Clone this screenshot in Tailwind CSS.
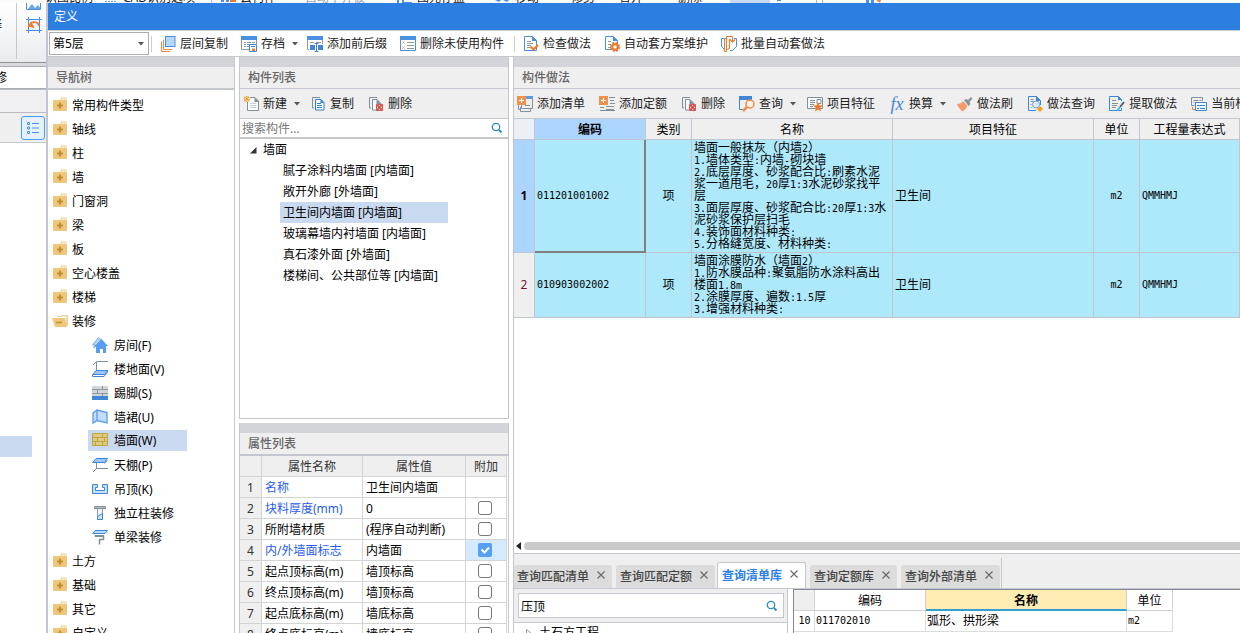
<!DOCTYPE html>
<html lang="zh-CN">
<head>
<meta charset="utf-8">
<title>定义</title>
<script src="https://cdn.jsdelivr.net/npm/@tailwindcss/browser@4"></script>
</head>
<body class="relative h-screen overflow-hidden bg-white font-['Noto_Sans','Noto_Sans_CJK_SC',sans-serif] text-xs leading-4 text-black">

<svg class="hidden" xmlns="http://www.w3.org/2000/svg">
  <symbol id="folder" viewBox="0 1 16 16"><path fill="#f4d9a4" d="M8 2.500 9 1.500h5l1 1v2H8z"/><path fill="#fff" d="M8 3.500h7v1H8z"/><rect x="1" y="4" width="14" height="11" rx="1" fill="#efc77c"/><path stroke="#c6902f" stroke-width="2" d="M5 9.500h6M8 6.500v6"/></symbol>
  <symbol id="folder-open" viewBox="0 1 16 16"><path fill="#f2d196" d="M5 4h4l1-1h6v11h-2V5H5z"/><path fill="#fff" d="M10 4.500h5v1h-5z"/><path fill="#efc77c" d="M0 6h13l2 9H3z"/><path stroke="#c6902f" stroke-width="1.500" d="M4 10.500h6"/></symbol>
  <symbol id="arrow" viewBox="0 0 6 4"><path fill="#555" d="M0 0h6L3 3.500z"/></symbol>
  <symbol id="x" viewBox="0 0 8 8"><path stroke="#666" stroke-width="1.100" d="m.5.500 7 7m0-7-7 7"/></symbol>
  <symbol id="search" viewBox="0 0 12 12" fill="none" stroke="#2d8cc4"><circle cx="5" cy="5" r="3.700" stroke-width="1.300"/><path stroke-width="2" d="m8 8 2.500 2.500"/></symbol>
  <symbol id="layers" viewBox="0 0 16 16" fill="none"><path stroke="#e98a45" d="M1.500 5.500v10H10M3.500 3.500v10H12"/><rect x="5.500" y=".5" width="9.500" height="10" fill="#b5d7fb" stroke="#4a8fdc"/></symbol>
  <symbol id="save" viewBox="0 0 16 16" fill="none"><path stroke="#8a9aa5" d="M.5 4v9.500H8M15.500 4v4"/><path fill="#4a90e2" d="M0 0h16v4H0z"/><path stroke="#8a9aa5" d="M3 6.500h2m1 0h4m1 0h3M3 8.500h2m1 0h3M3 10.500h2m1 0h2"/><path fill="#fff" stroke="#3f86d8" d="M8.500 8.500h7v7h-7z"/><path stroke="#3f86d8" d="M10 10.500h4"/><path fill="#f07a2b" d="M11 12.500h3V15h-3z"/></symbol>
  <symbol id="affix" viewBox="0 0 16 16" fill="none"><path stroke="#8a9aa5" d="M.5 4v9.500H2M15.500 4v4"/><path fill="#4a90e2" d="M0 0h16v4H0z"/><path stroke="#8a9aa5" d="M3 6.500h4m2 0h5"/><path fill="#3f86d8" d="M3 9h5v5H3zm8 0h5v5h-5z"/><path stroke="#3f86d8" d="M9.500 7v8.500m-2 0h4m-4-8h4"/></symbol>
  <symbol id="delunused" viewBox="0 0 16 16" fill="none"><path fill="#fff" stroke="#4a90e2" d="M.5.500h15v14H.5z"/><path fill="#4a90e2" d="M0 0h16v4H0z"/><path stroke="#f09a3c" d="m2.500 5.500 2 2m0-2-2 2m0 3 2 2m0-2-2 2"/><path stroke="#8a9aa5" d="M7 6.500h7M7 9.500h7M7 12.500h7"/></symbol>
  <symbol id="docheck" viewBox="0 0 16 16" fill="none"><path fill="#fff" stroke="#4a90e2" d="M1.500.500h8l4 4v10h-12z"/><path fill="#4a90e2" d="M9 0v5h5z"/><path stroke="#8a9aa5" d="M4 5.500h4M4 7.500h6M4 9.500h4M4 11.500h3"/><path stroke="#f07a2b" stroke-width="2" d="m7.500 10.500 3 3 4.500-4.500"/></symbol>
  <symbol id="docgear" viewBox="0 0 16 16" fill="none"><path fill="#fff" stroke="#4a90e2" d="M1.500.500h8l4 4v9h-12z"/><path fill="#4a90e2" d="M9 0v5h5z"/><path stroke="#8a9aa5" d="M4 5.500h3M4 8.500h3M4 11.500h3"/><circle cx="11" cy="11" r="4" stroke="#f07a2b" stroke-width="2" stroke-dasharray="2 1.140"/><circle cx="11" cy="11" r="2.700" fill="#fff" stroke="#f07a2b" stroke-width="2"/></symbol>
  <symbol id="batch" viewBox="0 0 16 16" fill="none"><path stroke="#4a90e2" d="M4 2.500H.5v8l3 3M13 2.500h2.500v8l-4 4H9"/><path fill="#fff" stroke="#f07a2b" d="M3.500 2.500h2v13h-2zM5.500.500v13l3-1V3"/><path stroke="#f07a2b" d="M5.500.500h6v5"/><path stroke="#f07a2b" stroke-width="1.300" d="m9 3.500 2.500 2.500L14 3.500"/></symbol>
  <symbol id="new" viewBox="0 0 16 16" fill="none"><path fill="#fafafa" stroke="#82909b" d="M3.500 1.500H11l3.500 3.500v9.500h-11z"/><path fill="#82909b" d="M10.500 1v5H15z"/><path stroke="#c9cfd4" d="M6 7.500h6M6 9.500h6M6 11.500h6"/><path fill="#efefef" d="M0 0h6v6H0z"/><path stroke="#f5a02e" stroke-width="1.300" d="M.5.800 5 5.300M5 .8.500 5.300"/><path fill="#f5a02e" d="M2 0h1.500v1H2zm0 5h1.500v1H2zM0 2.500h1V4H0zm4.700 0h1V4h-1z"/></symbol>
  <symbol id="copy" viewBox="0 0 16 16" fill="none"><path stroke="#82909b" d="M10 1.500H2.500v10.500H4"/><path fill="#fff" stroke="#2f7fd0" d="M5.500 3.500H11l3 3v7.500H5.500z"/><path fill="#2f7fd0" d="M10.500 3v4H14z"/><path stroke="#2f7fd0" d="M7 7.500h4M7 9.500h5M7 11.500h5"/></symbol>
  <symbol id="del" viewBox="0 0 16 16" fill="none"><path stroke="#82909b" d="M9 1.500H1.500V12H3"/><path fill="#fafafa" stroke="#82909b" d="M4.500 3.500H9l4 4v6.500H4.500z"/><path fill="#82909b" d="M8.500 3v5H13z"/><path fill="#fff" stroke="#d9534f" d="M8.500 8.500h6v6h-6z"/><path stroke="#d9534f" stroke-width="1.800" d="m9 9 5 5m0-5-5 5"/></symbol>
  <symbol id="addlist" viewBox="0 0 16 16" fill="none"><path stroke="#82909b" d="M1.500 9v4.500h2M3.500 11v4.500h10v-3m2-10v10h-11V9"/><path fill="#5a9be8" d="M9 0h7v3H9z"/><path stroke="#82909b" d="M8 9.500h5"/><path fill="#ee924b" d="M0 0h9v9H0z"/><path stroke="#fff" d="M2 4.500h5M4.500 2v5"/></symbol>
  <symbol id="addquota" viewBox="0 0 16 16" fill="none"><path stroke="#82909b" d="M10 1.500h6M11 4.500h4M11 7.500h5M7 10.500h8M1 11.500h4m2 2h8M1 14.500h15"/><path fill="#ee924b" d="M0 0h9v9H0z"/><path stroke="#fff" d="M2 4.500h5M4.500 2v5"/></symbol>
  <symbol id="query" viewBox="0 0 16 16" fill="none"><path stroke="#3f86d8" d="M.5 3v10.500h3M12.500 3v1"/><path fill="#3f86d8" d="M0 0h13v4H0z"/><circle cx="11" cy="8" r="4" fill="#fdf1e7" stroke="#f08a45" stroke-width="1.500"/><path stroke="#f08a45" stroke-width="2.500" d="m8 11-4 4"/></symbol>
  <symbol id="feature" viewBox="0 0 16 16" fill="none"><path fill="#fafafa" stroke="#82909b" d="M.5 1.500h15v11H.5z"/><path stroke="#82909b" d="M3 4.500h5M3 6.500h5M3 8.500h4M3 10.500h3M10 3.500h4v4h-4z"/><path fill="#f07a2b" d="m11 6 1.500 3.300 3.500.3-2.700 2.200L14 15.500l-3-2-3 2 .8-3.700L6 9.600l3.500-.3z"/></symbol>
  <symbol id="brush" viewBox="0 0 16 16"><path fill="#f79a6b" d="M0 8c3 0 4.500-1 6-3l4.500 5c-1 2-3 4-5 5.500C3 13 1 11 0 8z"/><path fill="#8593a0" d="m7 4 2-1 2 1 3-3 1.500 1.500-3 3.500 1 2-2 2z"/></symbol>
  <symbol id="docquery" viewBox="0 0 16 16" fill="none"><path stroke="#3f86d8" d="M9 14.500H1.500V.500h8l4 4V9"/><path fill="#3f86d8" d="M9 0v5h5z"/><path stroke="#82909b" d="M3.500 3.500h3M3.500 5.500h3M3.500 8.500h1M3.500 11.500h1"/><circle cx="9" cy="8.500" r="3.500" fill="#dcebfb" stroke="#6d9fd6"/><path fill="#f6a11a" d="m13 10 3 3-3 3-3-3z"/></symbol>
  <symbol id="extract" viewBox="0 0 16 16" fill="none"><path stroke="#3f86d8" d="M12.500 12v2.500H.5V.500h9l3 3V5"/><path fill="#3f86d8" d="M9 0v4h4z"/><path stroke="#82909b" d="M3 4.500h4M3 7.500h6M3 9.500h5M3 11.500h4"/><path stroke="#4e6170" stroke-width="2" d="m15 6-4 5"/><path stroke="#3fc0e4" stroke-width="2" d="m11 11-2.500 3.500"/></symbol>
  <symbol id="current" viewBox="0 0 16 16" fill="none"><path stroke="#82909b" d="M3.500 9.500h-3v-8h11v3M2.500 4.500h5m1 0h2M2.500 6.500h1"/><path stroke="#f07a2b" d="M1.500 11v2.500H4"/><path fill="#f4f9ff" stroke="#3f86d8" d="M4.500 6.500h11v8h-11z"/><path stroke="#3f86d8" d="M6 9.500h8M6 12.500h2m1 0h5"/></symbol>
  <symbol id="house" viewBox="0 0 16 16"><path fill="#b8d7f8" stroke="#6fa8e6" d="m.7 7.500 6-7 3 3L2 11V7z"/><path fill="#5a9df0" d="m9.500 2 6.500 7h-2v7h-3v-4H8v4H4V9H2.500z"/></symbol>
  <symbol id="floor" viewBox="0 0 16 16" fill="none"><path stroke="#7e8f9b" d="M1 4 4.500.500H16M4.500 1v9"/><path fill="#9cc6f5" stroke="#3f86d8" d="M4 9.500h11.500l-3 4H.7z"/><path stroke="#3f86d8" d="M.5 13.500v2H12l3.500-4.500V9.500"/></symbol>
  <symbol id="skirt" viewBox="0 0 16 16"><path fill="#d3d6d9" d="M0 1h16v10H0z"/><path stroke="#8f979d" d="M0 4.500h16M0 8.500h16M10.500 1v3M5.500 5v3M10.500 9v2"/><path fill="#3f86d8" d="M0 11h16v4H0z"/></symbol>
  <symbol id="dado" viewBox="0 0 16 16"><path fill="#c2dcf9" stroke="#5a9be8" stroke-width="1.300" d="m1 4 4-3 10 2.500V14L5 11.500 1 14zM5 1v10.500"/></symbol>
  <symbol id="wall" viewBox="0 0 16 16" fill="none"><path fill="#dccb83" stroke="#c2a53c" d="M.5 1.500h15v12H.5zM1 5.500h14M1 9.500h14M10.500 2v3M5.500 6v3M12.500 6v3M3.500 10v3M10.500 10v3"/></symbol>
  <symbol id="ceiling" viewBox="0 0 16 16" fill="none"><path fill="#9cc6f5" stroke="#3f86d8" d="M4 1.500h11.500l-3 4H.7z"/><path stroke="#3f86d8" d="M12.500 6.500 15.500 3"/><path stroke="#7e8f9b" d="M4.500 6v6M16 11.500H4.500L1 15"/></symbol>
  <symbol id="drop" viewBox="0 0 16 16"><path fill="#c5e0fb" stroke="#3f86d8" d="M.5 3.500h5v3h-2v3h9v-3h-2v-3h5v9H.5z"/></symbol>
  <symbol id="column" viewBox="0 0 16 16"><path fill="#b5bcc2" stroke="#7e8f9b" d="M2.500 1.500h11v2h-11z"/><path fill="#eef5fc" stroke="#8b9aa6" d="M5.500 4v10.500h5V4"/><path fill="#c5e0fb" stroke="#3f86d8" d="M5.500 14.500v-3l5-3v6z"/></symbol>
  <symbol id="beam" viewBox="0 0 16 16" fill="none"><path fill="#b9d8f8" stroke="#3f86d8" d="M3 1.500h12.500l-2.500 3H.7z"/><path fill="#aeb6bc" stroke="#7e8f9b" d="M3 6.500h9v1H3z"/><path stroke="#7e8f9b" stroke-width="1.500" d="M11.500 8v2.500h-4v5"/></symbol>
</svg>

<!-- Main window behind the dialog -->
<div class="absolute inset-0 flex flex-col bg-white">
  <div class="flex h-[3px] items-end overflow-hidden bg-[#fafbfc] pl-[45px] leading-[10px] whitespace-nowrap text-[#222]">
    <span class="w-[60px]">识图比例</span><svg class="h-[3px] w-[18px]"><path stroke="#6ba5e8" stroke-dasharray="2 1" d="M0 1.500h12"/></svg><span class="w-[87px]">CAD识别选项</span><svg class="h-[3px] w-[30px]"><path fill="#b8bcc2" d="M1 0h1v3H1z"/><path stroke="#4a90e2" stroke-width="2" stroke-dasharray="3 2" d="M11 1h8"/><path stroke="#f07a2b" stroke-width="2" d="M20 1h6"/></svg><span class="w-[65px]">云构件</span><span class="w-[92px] text-gray-400">自动平齐板</span><svg class="h-[3px] w-5"><path fill="#4a90e2" d="M0 0h2v3H0zm5 0h2v3H5zm2 2h8v1H7z"/></svg><span class="w-[78px]">图元存盘</span><svg class="h-[3px] w-5"><path fill="#4a90e2" d="M0 0h6l-2 2zm8 0h6l-2 2z"/></svg><span class="w-[56px]">移动</span><span class="w-[48px]">修剪</span><span class="w-[59px]">合并</span><span class="w-[52px]">删除</span><span class="h-3 w-10 bg-[#c9d9f0]"></span><svg class="h-[3px] w-[175px]"><path fill="#4a90e2" d="M7 0h4v1H7zm89 0h3v3h-3zm5 0h3v3h-3z"/><path fill="#e98a45" d="M106 0h5l-1 3z"/><path fill="#b8bcc2" d="M46 0h1v3h-1zm6 0h1v3h-1z"/></svg>
  </div>
  <div class="flex h-[59px] w-[46px] bg-linear-to-b from-white to-[#e9ecef]">
    <div class="h-14 w-[17px] overflow-hidden border-r border-[#c4c7cc] pt-3.5"><span class="-ml-2.5">择</span></div>
    <svg class="ml-[9px] h-[30px] w-5" viewBox="0 0 20 30" fill="none"><path fill="#6ba5e8" d="m2 6 4-5 3 4 3-3 3 4z"/><path stroke="#4a90e2" d="M.5 0v6.500h14V0M2.500 16.500h11v11h-11zM0 16.500h16M0 27.500h16M2.500 14v16M13.500 14v16"/><path stroke="#f07a2b" stroke-width="1.800" d="M4 22c2-4 8-4 9 1M3 23l4 1-2-4z"/></svg>
  </div>
  <div class="h-1 w-[46px] border-t border-[#8c9196] bg-[#d8dadd]"></div>
  <div class="h-[23px] w-[46px] overflow-hidden border-y border-[#a9acb1] bg-white pt-[3px]"><span class="-ml-[5px]">修</span></div>
  <div class="h-6 w-[46px] border-y border-[#b9bdc2] bg-[#f0f0f2]"></div>
  <div class="flex h-[30px] w-[46px] items-center justify-end border-b border-[#c4c7cc] bg-[#efeff0] pr-px">
    <button aria-label="列表视图" class="flex size-6 items-center justify-center rounded-[3px] border border-[#4a9cf0] bg-[#e3f0fd]"><svg class="size-[14px]" viewBox="0 0 14 14" fill="none" stroke="#4a90e2"><path d="M1.500 1.500h2v2h-2zM1.500 6h2v2h-2zM1.500 10.500h2v2h-2zM6 2.500h7M6 7h7M6 11.500h7"/></svg></button>
  </div>
  <div class="mt-[293px] h-[21px] w-8 bg-[#c9d9f0]"></div>
</div>

<!-- Definition dialog -->
<div class="absolute top-[3px] right-0 bottom-0 left-[46px] flex flex-col border-l-2 border-[#c2c5d0] bg-white">
  <header class="flex h-[27px] shrink-0 items-center bg-[#2c7ee1] px-1.5 text-white">定义</header>
  <div class="flex h-[27px] shrink-0 items-center border-y border-[#c6c9cf] pl-px whitespace-nowrap text-[#222]">
    <div class="grid h-[23px] w-[100px] shrink-0 items-center border border-[#adadad]">
      <select aria-label="楼层" class="col-start-1 row-start-1 h-full w-full appearance-none bg-transparent px-[3px] text-black"><option>第5层</option></select>
      <svg class="pointer-events-none col-start-1 row-start-1 mr-1 h-1 w-1.5 justify-self-end"><use href="#arrow"/></svg>
    </div>
    <span class="mr-0.5 ml-0.5 h-4 w-px bg-[#ccc]"></span>
    <button class="mr-px flex items-center gap-1 px-1.5"><svg class="size-4"><use href="#layers"/></svg>层间复制</button>
    <button class="mr-px flex items-center gap-1 pr-0.5 pl-1.5"><svg class="size-4"><use href="#save"/></svg>存档<svg class="ml-[3px] h-1 w-1.5"><use href="#arrow"/></svg></button>
    <button class="mr-px flex items-center gap-1 px-1.5"><svg class="size-4"><use href="#affix"/></svg>添加前后缀</button>
    <button class="flex items-center gap-1 px-1.5"><svg class="size-4"><use href="#delunused"/></svg>删除未使用构件</button>
    <span class="mr-0.5 ml-1 h-4 w-px bg-[#ccc]"></span>
    <button class="mr-px flex items-center gap-1 px-1.5"><svg class="size-4"><use href="#docheck"/></svg>检查做法</button>
    <button class="mr-px flex items-center gap-1 px-1.5"><svg class="size-4"><use href="#docgear"/></svg>自动套方案维护</button>
    <button class="flex items-center gap-1 px-1.5"><svg class="size-4"><use href="#batch"/></svg>批量自动套做法</button>
  </div>

  <main class="flex min-h-0 flex-1 gap-1">
    <!-- Navigation tree -->
    <nav class="w-[187px] shrink-0 overflow-hidden border-r border-[#c4c7d0]">
      <div class="h-2.5 bg-[#d2d4da]"></div>
      <h2 class="flex h-[23px] items-center border-b-2 border-[#c4c7cf] bg-[#efefef] px-2 font-medium text-[#666]">导航树</h2>
      <ul class="pt-1 whitespace-nowrap *:flex *:h-6 *:items-center [&_svg]:mb-0.5">
        <li class="gap-1 pl-1"><svg class="size-4"><use href="#folder"/></svg>常用构件类型</li>
        <li class="gap-1 pl-1"><svg class="size-4"><use href="#folder"/></svg>轴线</li>
        <li class="gap-1 pl-1"><svg class="size-4"><use href="#folder"/></svg>柱</li>
        <li class="gap-1 pl-1"><svg class="size-4"><use href="#folder"/></svg>墙</li>
        <li class="gap-1 pl-1"><svg class="size-4"><use href="#folder"/></svg>门窗洞</li>
        <li class="gap-1 pl-1"><svg class="size-4"><use href="#folder"/></svg>梁</li>
        <li class="gap-1 pl-1"><svg class="size-4"><use href="#folder"/></svg>板</li>
        <li class="gap-1 pl-1"><svg class="size-4"><use href="#folder"/></svg>空心楼盖</li>
        <li class="gap-1 pl-1"><svg class="size-4"><use href="#folder"/></svg>楼梯</li>
        <li class="gap-1 pl-1"><svg class="size-4"><use href="#folder-open"/></svg>装修</li>
        <li class="gap-1.5 pl-11"><svg class="size-4"><use href="#house"/></svg>房间(F)</li>
        <li class="gap-1.5 pl-11"><svg class="size-4"><use href="#floor"/></svg>楼地面(V)</li>
        <li class="gap-1.5 pl-11"><svg class="size-4"><use href="#skirt"/></svg>踢脚(S)</li>
        <li class="gap-1.5 pl-11"><svg class="size-4"><use href="#dado"/></svg>墙裙(U)</li>
        <li class="pb-1 pl-10"><div class="flex h-[21px] w-[99px] items-center gap-1.5 bg-[#c9d9f0] pt-px pl-1"><svg class="size-4"><use href="#wall"/></svg>墙面(W)</div></li>
        <li class="gap-1.5 pl-11"><svg class="size-4"><use href="#ceiling"/></svg>天棚(P)</li>
        <li class="gap-1.5 pl-11"><svg class="size-4"><use href="#drop"/></svg>吊顶(K)</li>
        <li class="gap-1.5 pl-11"><svg class="size-4"><use href="#column"/></svg>独立柱装修</li>
        <li class="gap-1.5 pl-11"><svg class="size-4"><use href="#beam"/></svg>单梁装修</li>
        <li class="gap-1 pl-1"><svg class="size-4"><use href="#folder"/></svg>土方</li>
        <li class="gap-1 pl-1"><svg class="size-4"><use href="#folder"/></svg>基础</li>
        <li class="gap-1 pl-1"><svg class="size-4"><use href="#folder"/></svg>其它</li>
        <li class="gap-1 pl-1"><svg class="size-4"><use href="#folder"/></svg>自定义</li>
      </ul>
    </nav>

    <div class="flex w-[270px] shrink-0 flex-col gap-1">
      <!-- Component list -->
      <section class="flex min-h-0 flex-1 flex-col border-x border-b border-[#c4c7cf]">
        <div class="h-2.5 bg-[#d2d4da]"></div>
        <h2 class="flex h-[22px] shrink-0 items-center border-b border-[#c4c7cf] bg-[#efefef] px-2 font-medium text-[#666]">构件列表</h2>
        <div class="flex h-[30px] shrink-0 items-center border-b border-[#c4c7cf] bg-[#efefef] pl-1 text-[#222]">
          <button class="mr-2.5 flex items-center gap-[3px]"><svg class="size-4"><use href="#new"/></svg>新建<svg class="ml-1 h-1 w-1.5"><use href="#arrow"/></svg></button>
          <button class="mr-3.5 flex items-center gap-1"><svg class="size-4"><use href="#copy"/></svg>复制</button>
          <button class="flex items-center gap-1"><svg class="size-4"><use href="#del"/></svg>删除</button>
        </div>
        <div class="flex h-5 shrink-0 items-center border-b-2 border-[#c4c7cf] pr-[5px] pl-0.5">
          <input aria-label="搜索构件" placeholder="搜索构件..." class="h-full min-w-0 flex-1 outline-none placeholder:text-[#777]">
          <svg class="size-3"><use href="#search"/></svg>
        </div>
        <ul class="whitespace-nowrap *:flex *:h-[21px] *:items-center">
          <li class="gap-1.5 pl-[9px]"><svg class="size-2" viewBox="0 0 8 8"><path fill="#333" d="M7.500 1v6.500H1z"/></svg>墙面</li>
          <li class="pl-[43px]">腻子涂料内墙面 [内墙面]</li>
          <li class="pl-[43px]">敞开外廊 [外墙面]</li>
          <li class="pl-10"><span class="flex h-[21px] w-[168px] items-center bg-[#c9d9f0] pl-[3px]">卫生间内墙面 [内墙面]</span></li>
          <li class="pl-[43px]">玻璃幕墙内衬墙面 [内墙面]</li>
          <li class="pl-[43px]">真石漆外面 [外墙面]</li>
          <li class="pl-[43px]">楼梯间、公共部位等 [内墙面]</li>
        </ul>
      </section>
      <!-- Property list -->
      <section class="h-[210px] shrink-0 overflow-hidden border-x border-[#c4c7cf]">
        <div class="h-2.5 bg-[#d2d4da]"></div>
        <h2 class="flex h-[23px] items-center border-b-2 border-[#c4c7cf] bg-[#efefef] px-2 font-medium text-[#666]">属性列表</h2>
        <table class="w-[267px] table-fixed border-separate border-spacing-0 whitespace-nowrap [&_td]:h-[21px] [&_td]:border-r [&_td]:border-b [&_td]:border-[#d4d4d4] [&_td]:p-0 [&_td]:pt-0.5 [&_td]:pl-[3px] [&_td:last-child]:pt-0 [&_th]:h-[21px] [&_th]:border-r [&_th]:border-b [&_th]:border-[#d4d4d4] [&_th]:bg-[#efefef] [&_th]:p-0 [&_th]:pt-0.5 [&_th]:font-normal [&_th]:text-[#333]">
          <colgroup><col class="w-[22px]"><col class="w-[101px]"><col class="w-[103px]"><col class="w-[41px]"></colgroup>
          <thead><tr><th></th><th>属性名称</th><th>属性值</th><th>附加</th></tr></thead>
          <tbody>
            <tr><th>1</th><td class="text-[#1f5cf0]">名称</td><td>卫生间内墙面</td><td></td></tr>
            <tr><th>2</th><td class="text-[#1f5cf0]">块料厚度(mm)</td><td>0</td><td><input type="checkbox" aria-label="块料厚度" class="ml-[9px] block size-3.5 appearance-none rounded-[3px] border border-[#777] bg-white"></td></tr>
            <tr><th>3</th><td>所附墙材质</td><td>(程序自动判断)</td><td><input type="checkbox" aria-label="所附墙材质" class="ml-[9px] block size-3.5 appearance-none rounded-[3px] border border-[#777] bg-white"></td></tr>
            <tr><th>4</th><td class="text-[#1f5cf0]">内/外墙面标志</td><td>内墙面</td><td class="bg-[#d6eaff]"><div class="ml-[9px] grid size-3.5"><input type="checkbox" checked aria-label="内/外墙面标志" class="col-start-1 row-start-1 size-3.5 appearance-none rounded-[2px] bg-[#559ff5]"><svg class="pointer-events-none col-start-1 row-start-1 size-3.5" viewBox="0 0 14 14" fill="none"><path stroke="#fff" stroke-width="2" d="m3.500 6.500 3 3 4.500-5"/></svg></div></td></tr>
            <tr><th>5</th><td>起点顶标高(m)</td><td>墙顶标高</td><td><input type="checkbox" aria-label="起点顶标高" class="ml-[9px] block size-3.5 appearance-none rounded-[3px] border border-[#777] bg-white"></td></tr>
            <tr><th>6</th><td>终点顶标高(m)</td><td>墙顶标高</td><td><input type="checkbox" aria-label="终点顶标高" class="ml-[9px] block size-3.5 appearance-none rounded-[3px] border border-[#777] bg-white"></td></tr>
            <tr><th>7</th><td>起点底标高(m)</td><td>墙底标高</td><td><input type="checkbox" aria-label="起点底标高" class="ml-[9px] block size-3.5 appearance-none rounded-[3px] border border-[#777] bg-white"></td></tr>
            <tr><th>8</th><td>终点底标高(m)</td><td>墙底标高</td><td><input type="checkbox" aria-label="终点底标高" class="ml-[9px] block size-3.5 appearance-none rounded-[3px] border border-[#777] bg-white"></td></tr>
          </tbody>
        </table>
      </section>
    </div>

    <!-- Component methods -->
    <div class="flex min-w-0 flex-1 flex-col overflow-hidden border-l border-[#c4c7cf]">
      <section class="flex min-h-0 flex-1 flex-col overflow-hidden border-b border-[#c4c7cf]">
        <div class="h-2.5 shrink-0 bg-[#d2d4da]"></div>
        <h2 class="flex h-[22px] shrink-0 items-center border-b border-[#c4c7cf] bg-[#efefef] px-2 font-medium text-[#666]">构件做法</h2>
        <div class="flex h-[30px] shrink-0 items-center overflow-hidden border-b border-[#c4c7cf] bg-[#efefef] pl-[3px] whitespace-nowrap text-[#222] *:flex *:shrink-0 *:items-center *:gap-1">
          <button class="mr-3.5"><svg class="size-4"><use href="#addlist"/></svg>添加清单</button>
          <button class="mr-3.5"><svg class="size-4"><use href="#addquota"/></svg>添加定额</button>
          <button class="mr-3.5"><svg class="size-4"><use href="#del"/></svg>删除</button>
          <button class="mr-[11px]"><svg class="size-4"><use href="#query"/></svg>查询<svg class="ml-[3px] h-1 w-1.5"><use href="#arrow"/></svg></button>
          <button class="mr-3.5"><svg class="size-4"><use href="#feature"/></svg>项目特征</button>
          <button class="mr-[11px]"><i class="w-4 text-center font-['Liberation_Serif',serif] text-lg leading-4 text-[#3f86d8]">fx</i>换算<svg class="ml-[3px] h-1 w-1.5"><use href="#arrow"/></svg></button>
          <button class="mr-3.5"><svg class="size-4"><use href="#brush"/></svg>做法刷</button>
          <button class="mr-3.5"><svg class="size-4"><use href="#docquery"/></svg>做法查询</button>
          <button class="mr-3.5"><svg class="size-4"><use href="#extract"/></svg>提取做法</button>
          <button><svg class="size-4"><use href="#current"/></svg>当前构件自动套做法</button>
        </div>
        <div class="min-h-0 flex-1 overflow-hidden">
          <table class="w-full min-w-[726px] table-fixed border-separate border-spacing-0 leading-3 [&_td]:border-r [&_td]:border-b [&_td]:border-[#c3c5cd] [&_td]:bg-[#aee8fb] [&_td]:p-0 [&_td]:pl-0.5 [&_th]:border-r [&_th]:border-b [&_th]:border-[#c0c6d2] [&_th]:p-0">
            <colgroup><col class="w-[21px]"><col class="w-[111px]"><col class="w-[46px]"><col class="w-[201px]"><col class="w-[201px]"><col class="w-[46px]"><col></colgroup>
            <thead><tr class="h-[21px] bg-[#efefef] *:pt-0.5! *:font-normal"><th class="bg-[#ebeff6]"></th><th class="bg-[#abd5ff]"><b>编码</b></th><th>类别</th><th>名称</th><th>项目特征</th><th>单位</th><th>工程量表达式</th></tr></thead>
            <tbody>
              <tr class="h-[113px]">
                <th class="bg-[#abd5ff]">1</th>
                <td class="border-[#808080]! font-['DejaVu_Sans_Mono',monospace] text-[10px] shadow-[inset_-1px_-1px_0_#808080]">011201001002</td>
                <td class="pl-0! text-center">项</td>
                <td class="whitespace-nowrap [&_i]:font-['DejaVu_Sans_Mono',monospace] [&_i]:text-[10px] [&_i]:leading-[0] [&_i]:not-italic">墙面一般抹灰（内墙<i>2</i>）<br><i>1.</i>墙体类型<i>:</i>内墙<i>-</i>砌块墙<br><i>2.</i>底层厚度、砂浆配合比<i>:</i>刷素水泥<br>浆一道甩毛，<i>20</i>厚<i>1:3</i>水泥砂浆找平<br>层<br><i>3.</i>面层厚度、砂浆配合比<i>:20</i>厚<i>1:3</i>水<br>泥砂浆保护层扫毛<br><i>4.</i>装饰面材料种类<i>:</i><br><i>5.</i>分格缝宽度、材料种类<i>:</i></td>
                <td>卫生间</td>
                <td class="pl-0! text-center font-['DejaVu_Sans_Mono',monospace] text-[10px]">m2</td>
                <td class="font-['DejaVu_Sans_Mono',monospace] text-[10px]">QMMHMJ</td>
              </tr>
              <tr class="h-[65px]">
                <th class="bg-[#efefef] font-normal text-[#7a1030]">2</th>
                <td class="font-['DejaVu_Sans_Mono',monospace] text-[10px]">010903002002</td>
                <td class="pl-0! text-center">项</td>
                <td class="whitespace-nowrap [&_i]:font-['DejaVu_Sans_Mono',monospace] [&_i]:text-[10px] [&_i]:leading-[0] [&_i]:not-italic">墙面涂膜防水（墙面<i>2</i>）<br><i>1.</i>防水膜品种<i>:</i>聚氨脂防水涂料高出<br>楼面<i>1.8m</i><br><i>2.</i>涂膜厚度、遍数<i>:1.5</i>厚<br><i>3.</i>增强材料种类<i>:</i></td>
                <td>卫生间</td>
                <td class="pl-0! text-center font-['DejaVu_Sans_Mono',monospace] text-[10px]">m2</td>
                <td class="font-['DejaVu_Sans_Mono',monospace] text-[10px]">QMMHMJ</td>
              </tr>
            </tbody>
          </table>
        </div>
        <div class="flex h-[15px] shrink-0 items-center gap-[3px] pl-0.5">
          <svg class="h-2 w-[5px]" viewBox="0 0 5 8"><path fill="#222" d="M5 0v8L0 4z"/></svg>
          <div class="h-2 flex-1 rounded-l-full bg-[#c9c9c9]"></div>
        </div>
      </section>

      <!-- Query tabs -->
      <section class="flex h-[79px] shrink-0 flex-col overflow-hidden bg-[#efefef]">
        <div class="flex h-[35px] shrink-0 items-end border-b border-[#c4c7cf]">
          <div class="flex h-[30px] items-end gap-1 border-r border-[#c4c7d0] pr-px whitespace-nowrap text-[#444]">
            <button class="flex h-[23px] items-center gap-2 rounded-t-[3px] bg-[#dcdcdc] pr-[7px] pl-[3px] font-medium">查询匹配清单<svg class="mb-1 size-2"><use href="#x"/></svg></button>
            <button class="flex h-[23px] items-center gap-2 rounded-t-[3px] bg-[#dcdcdc] pr-[7px] pl-1 font-medium">查询匹配定额<svg class="mb-1 size-2"><use href="#x"/></svg></button>
            <button class="-ml-0.5 flex h-[26px] items-center gap-2 rounded-t-[3px] border border-b-0 border-[#c4c7cf] bg-white pr-[7px] pl-1 font-bold text-[#2a80e6]">查询清单库<svg class="mb-1 size-2"><use href="#x"/></svg></button>
            <button class="flex h-[23px] items-center gap-2 rounded-t-[3px] bg-[#dcdcdc] pr-[7px] pl-1 font-medium">查询定额库<svg class="mb-1 size-2"><use href="#x"/></svg></button>
            <button class="flex h-[23px] items-center gap-2 rounded-t-[3px] bg-[#dcdcdc] pr-[7px] pl-1 font-medium">查询外部清单<svg class="mb-1 size-2"><use href="#x"/></svg></button>
          </div>
        </div>
        <div class="flex min-h-0 flex-1 gap-[5px] bg-white">
          <div class="w-[274px] shrink-0 overflow-hidden border-r border-[#c4c7cf] bg-[#efefef]">
            <div class="mt-1 mr-[3px] mb-1 ml-1 flex h-[25px] items-center border border-[#c4c7cf] bg-white pr-[5px] pl-0.5">
              <input aria-label="搜索清单" value="压顶" class="h-full min-w-0 flex-1 outline-none">
              <svg class="size-3"><use href="#search"/></svg>
            </div>
            <div class="flex items-center gap-2 border-t border-[#c4c7cf] bg-white pt-0.5 pl-3"><svg class="h-2 w-[5px]" viewBox="0 0 5 8"><path fill="none" stroke="#999" d="M.5.500v6l4-3z"/></svg>土石方工程</div>
          </div>
          <div class="min-w-0 flex-1 overflow-hidden border-t border-l border-[#858b96]">
            <table class="w-[379px] table-fixed border-separate border-spacing-0 whitespace-nowrap [&_td]:h-[21px] [&_td]:border-r [&_td]:border-b [&_td]:border-[#dcdcdc] [&_td]:p-0 [&_td]:pl-px [&_th]:h-[21px] [&_th]:border-r [&_th]:border-b [&_th]:border-[#d0d0d0] [&_th]:p-0 [&_th]:pt-0.5">
              <colgroup><col class="w-[21px]"><col class="w-[111px]"><col class="w-[201px]"><col class="w-[46px]"></colgroup>
              <thead><tr class="font-normal"><th class="bg-[#efefef]"></th><th class="font-normal">编码</th><th class="border-b-2! border-b-[#35a0cf]! bg-[#ffecb3]">名称</th><th class="font-normal">单位</th></tr></thead>
              <tbody><tr><td class="text-center font-['DejaVu_Sans_Mono',monospace] text-[10px]">10</td><td class="font-['DejaVu_Sans_Mono',monospace] text-[10px]">011702010</td><td>弧形、拱形梁</td><td class="font-['DejaVu_Sans_Mono',monospace] text-[10px]">m2</td></tr></tbody>
            </table>
          </div>
        </div>
      </section>
    </div>
  </main>
</div>
</body>
</html>
